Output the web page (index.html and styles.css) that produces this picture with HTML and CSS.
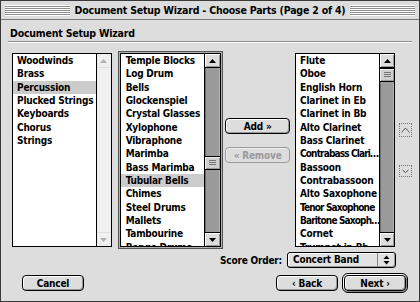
FILE: index.html
```html
<!DOCTYPE html>
<html lang="en">

<head>
    <meta charset="UTF-8">
    <title>Document Setup Wizard</title>
    <link rel="stylesheet" href="styles.css">
</head>

<body>
    <div class="window">
        <div class="titlebar">
            <span class="stripes"></span>
            <span class="title">Document Setup Wizard - Choose Parts (Page 2 of 4)</span>
            <span class="stripes"></span>
        </div>

        <div class="content">
            <div class="heading">Document Setup Wizard</div>
            <div class="rule"></div>

            <div class="lists">
                <!-- groups -->
                <div class="listbox groups">
                    <ul class="items">
                        <li>Woodwinds</li>
                        <li>Brass</li>
                        <li class="selected">Percussion</li>
                        <li>Plucked Strings</li>
                        <li>Keyboards</li>
                        <li>Chorus</li>
                        <li>Strings</li>
                    </ul>
                    <div class="scrollbar inactive">
                        <div class="arrow up"><svg width="7" height="4"><polygon points="0,4 7,4 3.5,0" /></svg></div>
                        <div class="track"></div>
                        <div class="arrow down"><svg width="7" height="4"><polygon points="0,0 7,0 3.5,4" /></svg></div>
                    </div>
                </div>

                <!-- instruments -->
                <div class="listbox instruments focused">
                    <ul class="items">
                        <li>Temple Blocks</li>
                        <li>Log Drum</li>
                        <li>Bells</li>
                        <li>Glockenspiel</li>
                        <li>Crystal Glasses</li>
                        <li>Xylophone</li>
                        <li>Vibraphone</li>
                        <li>Marimba</li>
                        <li>Bass Marimba</li>
                        <li class="selected">Tubular Bells</li>
                        <li>Chimes</li>
                        <li>Steel Drums</li>
                        <li>Mallets</li>
                        <li>Tambourine</li>
                        <li>Bongo Drums</li>
                    </ul>
                    <div class="scrollbar">
                        <div class="arrow up"><svg width="7" height="4"><polygon points="0,4 7,4 3.5,0" /></svg></div>
                        <div class="track thumb-low">
                            <div class="thumb"></div>
                        </div>
                        <div class="arrow down"><svg width="7" height="4"><polygon points="0,0 7,0 3.5,4" /></svg></div>
                    </div>
                </div>

                <div class="add-remove">
                    <button class="btn add-btn">Add &raquo;</button>
                    <button class="btn remove-btn" disabled>&laquo; Remove</button>
                </div>

                <!-- chosen parts -->
                <div class="listbox parts">
                    <ul class="items">
                        <li>Flute</li>
                        <li>Oboe</li>
                        <li>English Horn</li>
                        <li>Clarinet in Eb</li>
                        <li>Clarinet in Bb</li>
                        <li>Alto Clarinet</li>
                        <li>Bass Clarinet</li>
                        <li class="squeeze">Contrabass Clari…</li>
                        <li>Bassoon</li>
                        <li>Contrabassoon</li>
                        <li>Alto Saxophone</li>
                        <li class="squeeze">Tenor Saxophone</li>
                        <li class="squeeze">Baritone Saxoph…</li>
                        <li>Cornet</li>
                        <li>Trumpet in Bb</li>
                    </ul>
                    <div class="scrollbar">
                        <div class="arrow up"><svg width="7" height="4"><polygon points="0,4 7,4 3.5,0" /></svg></div>
                        <div class="track">
                            <div class="thumb"></div>
                        </div>
                        <div class="arrow down"><svg width="7" height="4"><polygon points="0,0 7,0 3.5,4" /></svg></div>
                    </div>
                </div>

                <div class="move-btns">
                    <div class="move-btn"><svg width="9" height="6"><polyline points="0.5,5.5 4.5,1 8.5,5.5" /></svg></div>
                    <div class="move-btn"><svg width="9" height="6"><polyline points="1.5,2 4.5,4.5 7.5,2" /></svg></div>
                </div>
            </div>

            <div class="score-row">
                <span class="score-label">Score Order:</span>
                <div class="popup">
                    <span class="popup-text">Concert Band</span>
                    <span class="popup-arrows">
                        <svg width="7" height="10">
                            <polygon points="0.5,4 6.5,4 3.5,0.5" />
                            <polygon points="0.5,6 6.5,6 3.5,9.5" />
                        </svg>
                    </span>
                </div>
            </div>

            <div class="button-row">
                <button class="btn cancel-btn">Cancel</button>
                <button class="btn back-btn">&lsaquo; Back</button>
                <div class="default-ring">
                    <button class="btn next-btn">Next &rsaquo;</button>
                </div>
            </div>
        </div>
    </div>
</body>

</html>
```

FILE: styles.css
```css
html,
body {
    margin: 0;
    padding: 0;
    width: 420px;
    height: 302px;
    overflow: hidden;
}

.window {
    box-sizing: border-box;
    width: 420px;
    height: 302px;
    border: 1px solid #3a3a3a;
    background: #dddddd;
    font-family: "DejaVu Sans Condensed", "DejaVu Sans", sans-serif;
    font-stretch: condensed;
    font-weight: bold;
    font-size: 10px;
    letter-spacing: -0.2px;
    color: #000;
}

/* title bar */
.titlebar {
    height: 18px;
    display: flex;
    align-items: center;
    padding: 0 4px;
    gap: 3px;
    border-bottom: 1px solid #7a7a7a;
    background: #dddddd;
}

.stripes {
    flex: 1;
    height: 11px;
    background: repeating-linear-gradient(to bottom, #ffffff 0 1px, #8e8e8e 1px 2px);
}

.title {
    padding: 0 2px;
    font-size: 10.5px;
    white-space: nowrap;
}

.content {
    padding: 0 7px;
}

.heading {
    margin: 6px 0 0 2px;
    height: 14px;
    line-height: 14px;
    font-size: 10.5px;
}

.rule {
    margin-top: 1px;
    border-top: 1px solid #8a8a8a;
    border-bottom: 1px solid #ffffff;
}

/* lists */
.lists {
    display: flex;
    margin: 10px 0 0 4px;
    height: 194px;
}

.listbox {
    box-sizing: border-box;
    height: 194px;
    display: flex;
    border: 1px solid #000;
    background: #fff;
}

.groups {
    width: 100px;
}

.instruments {
    width: 102px;
    margin-left: 8px;
}

.focused {
    box-shadow: 0 0 0 1px #b0b0b0, 0 0 0 2px #555555;
}

.parts {
    width: 100px;
    margin-left: 5px;
}

.items {
    flex: 1;
    list-style: none;
    margin: 0;
    padding: 0;
    overflow: hidden;
}

.items li {
    height: 13.33px;
    line-height: 13.33px;
    padding-left: 4px;
    white-space: nowrap;
}

.instruments .items li {
    padding-left: 5px;
}

.items li.selected {
    background: #cccccc;
}

.items li.squeeze {
    letter-spacing: -0.85px;
}

/* scroll bars */
.scrollbar {
    width: 14px;
    display: flex;
    flex-direction: column;
    border-left: 1px solid #000;
}

.instruments .scrollbar {
    width: 15px;
}

.arrow {
    height: 13px;
    display: flex;
    align-items: center;
    justify-content: center;
    background: #dddddd;
    box-shadow: inset 1px 1px #fff, inset -1px -1px #999;
}

.arrow.up {
    border-bottom: 1px solid #000;
}

.arrow.down {
    border-top: 1px solid #000;
}

.arrow svg polygon {
    fill: #000;
}

.track {
    flex: 1;
    background: #9a9a9a;
    box-shadow: inset 1px 0 #6e6e6e, inset -1px 0 #b4b4b4;
    display: flex;
    flex-direction: column;
}

.thumb-low {
    justify-content: flex-end;
    padding-bottom: 62px;
}

.thumb {
    height: 12px;
    border-top: 1px solid #000;
    border-bottom: 1px solid #000;
    background:
        linear-gradient(#777, #777) center 3px / 7px 1px no-repeat,
        linear-gradient(#777, #777) center 5px / 7px 1px no-repeat,
        linear-gradient(#777, #777) center 7px / 7px 1px no-repeat,
        #cfcfcf;
    box-shadow: inset 1px 1px #eee, inset -1px -1px #999;
}

.inactive .arrow {
    background: #f0f0f0;
    box-shadow: none;
    border-color: #e0e0e0;
}

.inactive .arrow svg polygon {
    fill: #b0b0b0;
}

.inactive .track {
    background: #f0f0f0;
    box-shadow: none;
}

/* buttons */
.btn {
    box-sizing: border-box;
    font-family: inherit;
    font-stretch: condensed;
    font-weight: bold;
    font-size: 10px;
    letter-spacing: -0.2px;
    color: #000;
    height: 16px;
    padding: 0;
    border: 1px solid #000;
    border-radius: 4px;
    background: #dddddd;
    box-shadow: inset 1px 1px #fff, inset -1px -1px #999;
    line-height: 13px;
}

.add-remove {
    display: flex;
    flex-direction: column;
    width: 65px;
    margin-left: 4px;
}

.add-btn {
    margin-top: 65px;
}

.remove-btn {
    margin-top: 13px;
    color: #9a9a9a;
    border-color: #9a9a9a;
    box-shadow: inset 1px 1px #eee;
}

.move-btns {
    display: flex;
    flex-direction: column;
    margin-left: 4px;
}

.move-btn {
    box-sizing: border-box;
    width: 13px;
    height: 14px;
    border: 1px dotted #777;
    display: flex;
    align-items: center;
    justify-content: center;
    margin-top: 70px;
}

.move-btn+.move-btn {
    margin-top: 28px;
    height: 12px;
}

.move-btn polyline {
    fill: none;
    stroke: #555;
    stroke-width: 1;
}

/* score order */
.score-row {
    display: flex;
    justify-content: flex-end;
    align-items: center;
    gap: 5px;
    margin-top: 5px;
    padding-right: 16px;
    height: 16px;
}

.popup {
    box-sizing: border-box;
    width: 109px;
    height: 16px;
    display: flex;
    border: 1px solid #000;
    border-radius: 3px;
    background: #e2e2e2;
    box-shadow: inset 1px 1px #fff, inset -1px -1px #999;
}

.popup-text {
    flex: 1;
    padding-left: 5px;
    line-height: 14px;
}

.popup-arrows {
    width: 17px;
    border-left: 1px solid #888;
    display: flex;
    align-items: center;
    justify-content: center;
}

.popup-arrows polygon {
    fill: #000;
}

/* bottom buttons */
.button-row {
    display: flex;
    align-items: center;
    height: 20px;
    margin-top: 5px;
}

.cancel-btn {
    width: 62px;
    margin-left: 14px;
}

.back-btn {
    width: 62px;
    margin-left: auto;
}

.default-ring {
    box-sizing: border-box;
    width: 66px;
    height: 20px;
    margin: 0 4px 0 4px;
    padding: 1px;
    border: 1px solid #000;
    border-radius: 6px;
    background: #d0d0d0;
    box-shadow: inset 1px 1px #fff, inset -1px -1px #888;
    display: flex;
}

.next-btn {
    flex: 1;
}
```
